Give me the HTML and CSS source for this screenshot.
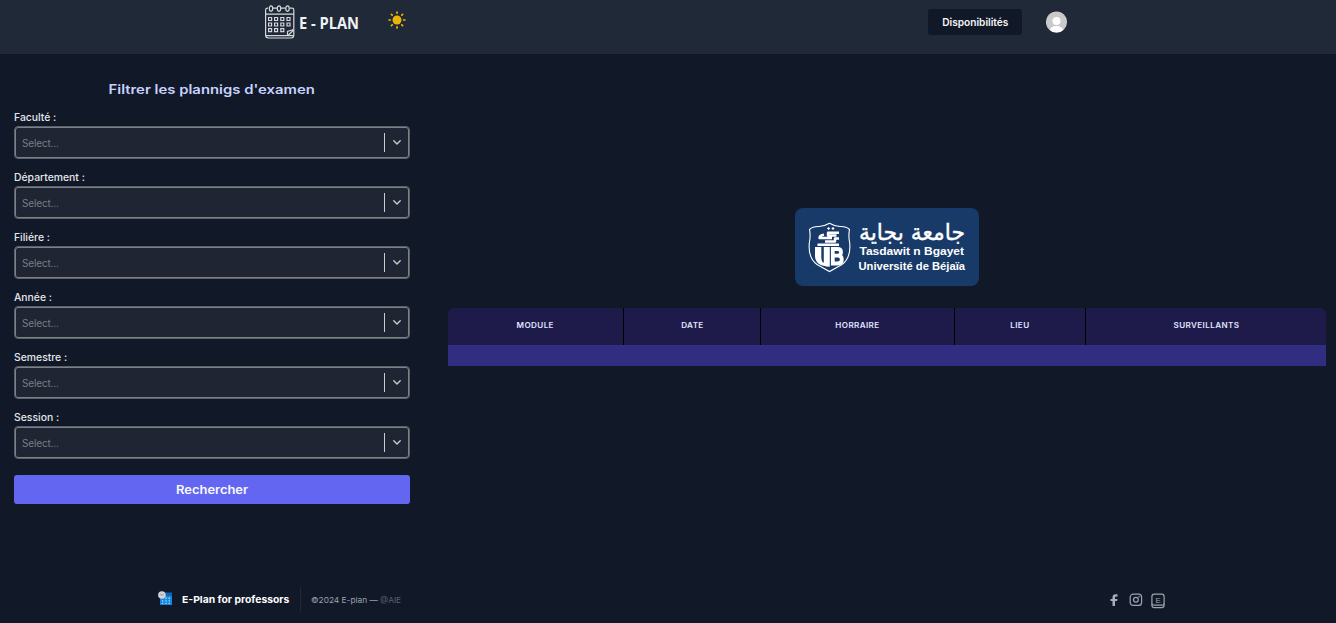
FILE: index.html
```html
<!DOCTYPE html>
<html lang="fr">
<head>
<meta charset="utf-8">
<title>E-Plan</title>
<link rel="stylesheet" href="styles.css">
</head>
<body>
<header class="header">
  <a class="brand">
    <svg class="brand-logo" viewBox="0 0 100 40" width="100" height="40">
      <g fill="none" stroke="#d5d8dc" stroke-width="1.2">
        <path d="M4 4.2H3.5Q1.6 4.2 1.6 6V31Q1.6 34 4.6 34H27Q29.8 34 29.8 31V6Q29.8 4.2 28 4.2H25.5"/>
        <path d="M1.6 10.2H29.8M2 31.6H29M23.5 31.5V27.5L29.6 25.5M24 31.5L29.6 26"/>
        <ellipse cx="7" cy="4.6" rx="1.7" ry="2.7"/><ellipse cx="15" cy="4.6" rx="1.7" ry="2.7"/><ellipse cx="23.5" cy="4.6" rx="1.7" ry="2.7"/>
        <path d="M9 4.2H13M17 4.2H21.5"/>
        <path d="M4.6 13.5h3v3h-3zM10.6 13.5h3v3h-3zM16.8 13.5h3v3h-3zM23 13.5h3v3h-3zM4.6 19h3v3h-3zM10.6 19h3v3h-3zM16.8 19h3v3h-3zM23 19h3v3h-3zM4.6 24.6h3v3h-3zM10.6 24.6h3v3h-3zM16.8 24.6h3v3h-3z"/>
      </g>
      <text class="brand-text" x="35" y="24.5" textLength="60" lengthAdjust="spacingAndGlyphs">E - PLAN</text>
    </svg>
  </a>
  <svg class="sun" viewBox="0 0 18 18" width="18" height="18">
    <circle cx="9" cy="9" r="4.5" fill="#eab308"/>
    <path stroke="#eab308" stroke-width="1.7" stroke-linecap="round" d="M9 1.1V2.1M9 15.9V16.9M1.1 9H2.3M15.7 9H16.9M3.4 3.4L4.2 4.2M13.8 13.8L14.6 14.6M3.4 14.6L4.2 13.8M13.8 4.2L14.6 3.4"/>
  </svg>
  <button class="dispo"><span class="fit">Disponibilités</span></button>
  <svg class="avatar" viewBox="0 0 22 22" width="22" height="22">
    <clipPath id="round"><circle cx="10.5" cy="11" r="10.6"/></clipPath>
    <g clip-path="url(#round)"><path fill="#cacaca" d="M0 0H22V22H0z"/><circle cx="10.5" cy="10" r="4" fill="#fff"/><ellipse cx="10.5" cy="20" rx="6.7" ry="5" fill="#fff"/></g>
  </svg>
</header>

<main class="main">
  <section class="filters">
    <h1 class="title"><span class="fit">Filtrer les plannigs d'examen</span></h1>
    <div class="field"><span class="label">Faculté :</span><div class="select"><span class="placeholder">Select...</span><i class="separator"></i><svg class="chevron" viewBox="0 0 8 5" width="8" height="5"><path d="M.8.8L4 3.9 7.2.8"/></svg></div></div>
    <div class="field"><span class="label">Département :</span><div class="select"><span class="placeholder">Select...</span><i class="separator"></i><svg class="chevron" viewBox="0 0 8 5" width="8" height="5"><path d="M.8.8L4 3.9 7.2.8"/></svg></div></div>
    <div class="field"><span class="label">Filiére :</span><div class="select"><span class="placeholder">Select...</span><i class="separator"></i><svg class="chevron" viewBox="0 0 8 5" width="8" height="5"><path d="M.8.8L4 3.9 7.2.8"/></svg></div></div>
    <div class="field"><span class="label">Année :</span><div class="select"><span class="placeholder">Select...</span><i class="separator"></i><svg class="chevron" viewBox="0 0 8 5" width="8" height="5"><path d="M.8.8L4 3.9 7.2.8"/></svg></div></div>
    <div class="field"><span class="label">Semestre :</span><div class="select"><span class="placeholder">Select...</span><i class="separator"></i><svg class="chevron" viewBox="0 0 8 5" width="8" height="5"><path d="M.8.8L4 3.9 7.2.8"/></svg></div></div>
    <div class="field"><span class="label">Session :</span><div class="select"><span class="placeholder">Select...</span><i class="separator"></i><svg class="chevron" viewBox="0 0 8 5" width="8" height="5"><path d="M.8.8L4 3.9 7.2.8"/></svg></div></div>
    <button class="search"><span class="fit">Rechercher</span></button>
  </section>

  <section class="planning">
    <svg class="university" viewBox="0 0 184 78" width="184" height="78">
      <rect width="184" height="78" rx="8" fill="#183a68"/>
      <path fill="none" stroke="#fff" stroke-width="1.1" d="M14.5 21.5Q18 18.2 24 18.5Q29 18.5 34.5 15.3Q40 18.5 45 18.5Q51 18.2 54.5 21.5Q53.2 28 54.7 35Q56 50 47 56.5Q39 61 34.5 63.5Q30 61 22 56.5Q13 50 14.3 35Q15.8 28 14.5 21.5Z"/>
      <path fill="none" stroke="#fff" stroke-width="2.4" stroke-linejoin="round" d="M44 24.8H33V27.5H41.5M37 30H24.5Q24.5 27.5 29 26.8M44 30.5H40V33.5H30M22.5 36.8H44"/>
      <path fill="#fff" d="M32 20.5l1.6-1.6 1.6 1.6-1.6 1.6zM36.4 20.5l1.6-1.6 1.6 1.6-1.6 1.6z"/>
      <path fill="#fff" d="M20 39H26.3V49Q26.3 54 28.8 54.8V39H34.8V58.8Q20 58 20 48Z"/>
      <path fill="none" stroke="#fff" stroke-width="3.8" d="M37.8 41H42.5Q46 41 46 44.2Q46 47.6 42.5 47.6H38.5H43Q46.8 47.6 46.8 51.5Q46.8 55.5 42.5 55.5H37.8Z"/>
      <text class="arabic" x="170" y="32" textLength="106" lengthAdjust="spacingAndGlyphs" direction="rtl">جامعة بجاية</text>
      <text class="uni-text" x="64.5" y="47.3" textLength="104.5" lengthAdjust="spacingAndGlyphs">Tasdawit n Bgayet</text>
      <text class="uni-text" x="63.5" y="62.3" textLength="106.5" lengthAdjust="spacingAndGlyphs">Université de Béjaïa</text>
    </svg>
    <div class="table">
      <div class="thead">
        <span class="th"><span class="fit">MODULE</span></span><span class="th"><span class="fit">DATE</span></span><span class="th"><span class="fit">HORRAIRE</span></span><span class="th"><span class="fit">LIEU</span></span><span class="th"><span class="fit">SURVEILLANTS</span></span>
      </div>
      <div class="row"></div>
    </div>
  </section>
</main>

<footer class="footer">
  <svg class="foot-logo" viewBox="0 0 16 16" width="16" height="16">
    <path fill="#1687dc" d="M2 3H14V14H2z"/><path fill="#0b68b8" d="M7 1.5H14V5H7z"/>
    <path fill="#a8ddff" d="M7.4 6.6h1.3v1.3H7.4zM10.6 6.6h1.3v1.3h-1.3zM4 9.2h1.3v1.3H4zM7.4 9.2h1.3v1.3H7.4zM10.6 9.2h1.3v1.3h-1.3zM4 11.8h1.3v1.3H4zM7.4 11.8h1.3v1.3H7.4zM10.6 11.8h1.3v1.3h-1.3z"/>
    <circle cx="3.9" cy="4" r="3.8" fill="#d2d2d2"/><path fill="none" stroke="#888" stroke-width=".9" d="M2.2 3L4 4.3 5.6 3.2"/>
  </svg>
  <span class="foot-name"><span class="fit">E-Plan for professors</span></span>
  <span class="copyright"><span class="fit">©2024 E-plan — <span class="team">@AIE</span></span></span>
  <div class="social">
    <svg class="fb-icon" viewBox="0 0 8 12" width="8" height="12"><path fill="#a8afba" d="M7.5.3V2.5H6Q5 2.5 5 3.5V5H7.4L7.1 7H5V12H2.5V7H.5V5H2.5V3.2Q2.5.3 5.5.3z"/></svg>
    <svg class="ig-icon" viewBox="0 0 14 14" width="14" height="14"><g fill="none" stroke="#9ca3af" stroke-width="1.2"><rect x="1.2" y="1.2" width="11.4" height="11.2" rx="3"/><circle cx="6.9" cy="6.8" r="2.4"/></g><circle cx="10" cy="3.8" r=".8" fill="#9ca3af"/></svg>
    <svg class="e-icon" viewBox="0 0 14 16" width="14" height="16"><g fill="none" stroke="#9ca3af" stroke-width="1.2"><rect x=".9" y="1.2" width="12.2" height="13.4" rx="2.4"/><path d="M1 10.5Q1.2 12.2 2.8 12.2H11.2Q12.8 12.2 13 10.5"/></g><text class="e-text" x="4.4" y="9.5">E</text></svg>
  </div>
</footer>
</body>
</html>
```
FILE: styles.css
```css
* { box-sizing: border-box; }
body {
  margin: 0;
  height: 623px;
  overflow: hidden;
  display: flex;
  flex-direction: column;
  background: #111827;
  color: #e5e7eb;
  font-family: Inter, "Liberation Sans", sans-serif;
}
svg { display: block; flex: none; }
button { border: 0; padding: 0; font-family: inherit; }
.fit { display: inline-block; white-space: nowrap; }

.header {
  height: 54px;
  flex: none;
  display: flex;
  align-items: flex-start;
  padding: 4px 269px 0 264px;
  background: #1f2937;
}
.brand-text { font: 700 16px "Open Sans", sans-serif; fill: #f0f1f3; }
.sun { margin: 7px 0 0 24px; }
.dispo {
  width: 94px;
  height: 26px;
  margin: 5px 24px 0 auto;
  border-radius: 3px;
  background: #111827;
  color: #f3f4f6;
  font-size: 10.5px;
  font-weight: 600;
  line-height: 25px;
}
.dispo .fit { transform: scaleX(.965); }
.avatar { margin-top: 7px; margin-right: -1px; }

.main { display: flex; flex: none; height: 523px; }
.filters { width: 410px; padding: 27px 0 0 14px; }
.title {
  margin: 0 0 12px;
  height: 18px;
  text-align: center;
  font-size: 12.5px;
  font-weight: 600;
  line-height: 18px;
  color: #c7d2fe;
}
.title .fit { transform: scaleX(1.19); }
.field { height: 60px; }
.label {
  display: block;
  height: 15px;
  font-size: 10.4px;
  font-weight: 500;
  line-height: 14px;
}
.select {
  display: flex;
  align-items: center;
  height: 33px;
  padding: 0 8px 0 6px;
  border: 1px solid #586170;
  border-radius: 4px;
  background: #1f2533;
  box-shadow: inset 0 0 0 1px #808080;
}
.placeholder {
  flex: 1;
  padding-left: 1px;
  font-size: 10px;
  letter-spacing: -.15px;
  color: #7b7e85;
  line-height: 14px;
}
.separator { width: 1px; height: 19px; background: #ccc; margin-right: 8px; }
.chevron path { fill: none; stroke: #ccc; stroke-width: 1.4; stroke-linecap: round; stroke-linejoin: round; }
.search {
  display: block;
  width: 396px;
  height: 29px;
  margin-top: 4px;
  border-radius: 3px;
  background: #6366f1;
  color: #f8fafc;
  font-size: 11.5px;
  font-weight: 600;
  line-height: 28px;
}
.search .fit { transform: scaleX(1.125); }

.planning { width: 878px; margin-left: 38px; padding-top: 154px; }
.university { margin: 0 auto 22px 347px; }
.arabic { font: 400 23px "DejaVu Sans", sans-serif; fill: #fff; stroke: #fff; stroke-width: .4px; }
.uni-text { font: 700 11.5px "Liberation Sans", sans-serif; fill: #fff; }
.table { border-radius: 6px 6px 0 0; overflow: hidden; }
.thead {
  display: grid;
  grid-template-columns: 176px 137px 194px 131px 240px;
  height: 37px;
  background: #1e1b4b;
}
.th {
  padding-bottom: 2px;
  border-right: 1px solid #000;
  text-align: center;
  font-size: 7.5px;
  font-weight: 600;
  letter-spacing: .35px;
  line-height: 35px;
  color: #e0e7ff;
}
.th .fit { transform: scaleX(1.08); }
.th:last-child { border-right: 0; }
.row { height: 21px; background: #312e81; }

.footer { display: flex; height: 46px; padding: 10px 171px 0 158px; }
.foot-logo { margin-top: 4px; margin-right: 8px; }
.foot-name {
  width: 119px;
  height: 24px;
  border-right: 1px solid #1f2937;
  font-size: 9.5px;
  font-weight: 700;
  line-height: 26px;
  color: #fff;
}
.foot-name .fit { transform-origin: left; transform: scaleX(1.09); }
.copyright { padding-left: 10px; font-size: 8px; line-height: 26px; color: #9ca3af; }
.copyright .fit { transform-origin: left; transform: scaleX(1.04); }
.team { color: #5b6371; }
.social { display: flex; align-items: flex-start; height: 26px; margin-left: auto; }
.fb-icon { margin: 7px 11px 0 0; }
.ig-icon { margin: 6px 8px 0 0; }
.e-icon { margin-top: 6px; }
.e-text { font: 400 8px "Liberation Sans", sans-serif; fill: #9ca3af; }
```
